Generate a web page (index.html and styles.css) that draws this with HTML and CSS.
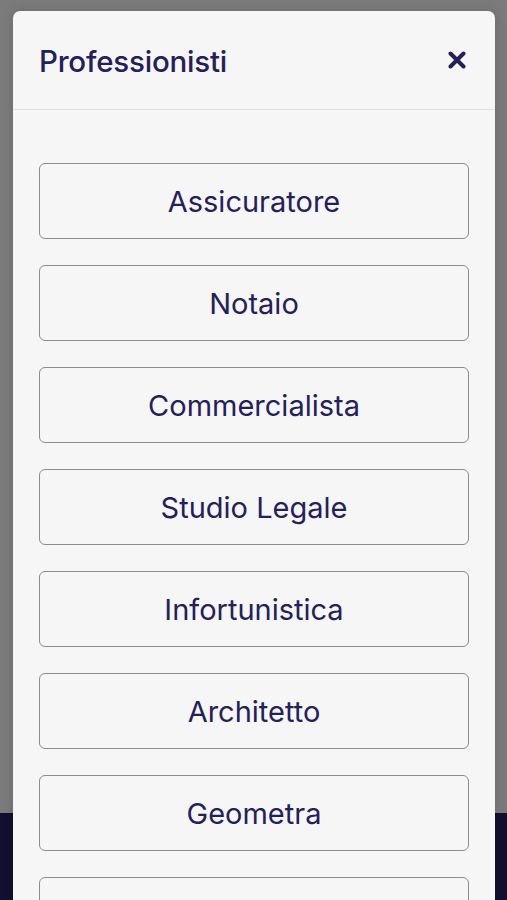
FILE: index.html
```html
<!DOCTYPE html>
<html lang="it">
<head>
    <meta charset="UTF-8">
    <meta name="viewport" content="width=device-width, initial-scale=1.0">
    <title>Professionisti</title>
    <link rel="stylesheet" href="styles.css">
</head>
<body>
    <div class="pagina">
        <div class="pagina-corpo"></div>
        <footer class="pagina-footer"></footer>
    </div>

    <div class="modale">
        <div class="modale-header">
            <h2>Professionisti</h2>
            <button class="chiudi" aria-label="Chiudi">
                <svg width="18" height="18" viewBox="0 0 18 18">
                    <path d="M2.5 2.5 L15.5 15.5 M15.5 2.5 L2.5 15.5" stroke="#24215a" stroke-width="4" stroke-linecap="round"/>
                </svg>
            </button>
        </div>
        <div class="modale-corpo">
            <button class="voce">Assicuratore</button>
            <button class="voce">Notaio</button>
            <button class="voce">Commercialista</button>
            <button class="voce">Studio Legale</button>
            <button class="voce">Infortunistica</button>
            <button class="voce">Architetto</button>
            <button class="voce">Geometra</button>
            <button class="voce" aria-label="Altro"></button>
        </div>
    </div>
</body>
</html>
```

FILE: styles.css
```css
body {
    margin: 0;
    padding: 0;
    font-family: Inter, "Noto Sans", sans-serif;
    overflow: hidden;
}
.pagina {
    height: 900px;
    display: flex;
    flex-direction: column;
    background-color: #7b7b7b;
}
.pagina-corpo {
    height: 813px;
}
.pagina-footer {
    flex: 1;
    background-color: #130f30;
}
.modale {
    position: absolute;
    top: 11px;
    left: 13px;
    width: 482px;
    height: 1000px;
    background-color: #f6f6f7;
    border-radius: 7px;
    box-shadow: 0 0 12px rgba(0, 0, 0, 0.15);
}
.modale-header {
    height: 98px;
    display: flex;
    align-items: center;
    justify-content: space-between;
    padding: 0 26px;
    border-bottom: 1px solid #e2e2e4;
}
.modale-header h2 {
    margin: 0;
    margin-top: 2px;
    font-size: 29.5px;
    font-weight: 500;
    color: #24215a;
    letter-spacing: -0.2px;
}
.chiudi {
    background: none;
    border: none;
    padding: 0;
    margin-right: 3px;
    margin-top: 0;
    display: flex;
    cursor: pointer;
}
.modale-corpo {
    display: flex;
    flex-direction: column;
    gap: 26px;
    padding: 53px 26px 0;
}
.voce {
    height: 76px;
    background-color: #f6f6f7;
    border: 1.5px solid #8c8c8e;
    border-radius: 6px;
    font-family: Inter, "Noto Sans", sans-serif;
    font-size: 29px;
    font-weight: 400;
    color: #24215a;
    padding: 0;
    cursor: pointer;
}
```
